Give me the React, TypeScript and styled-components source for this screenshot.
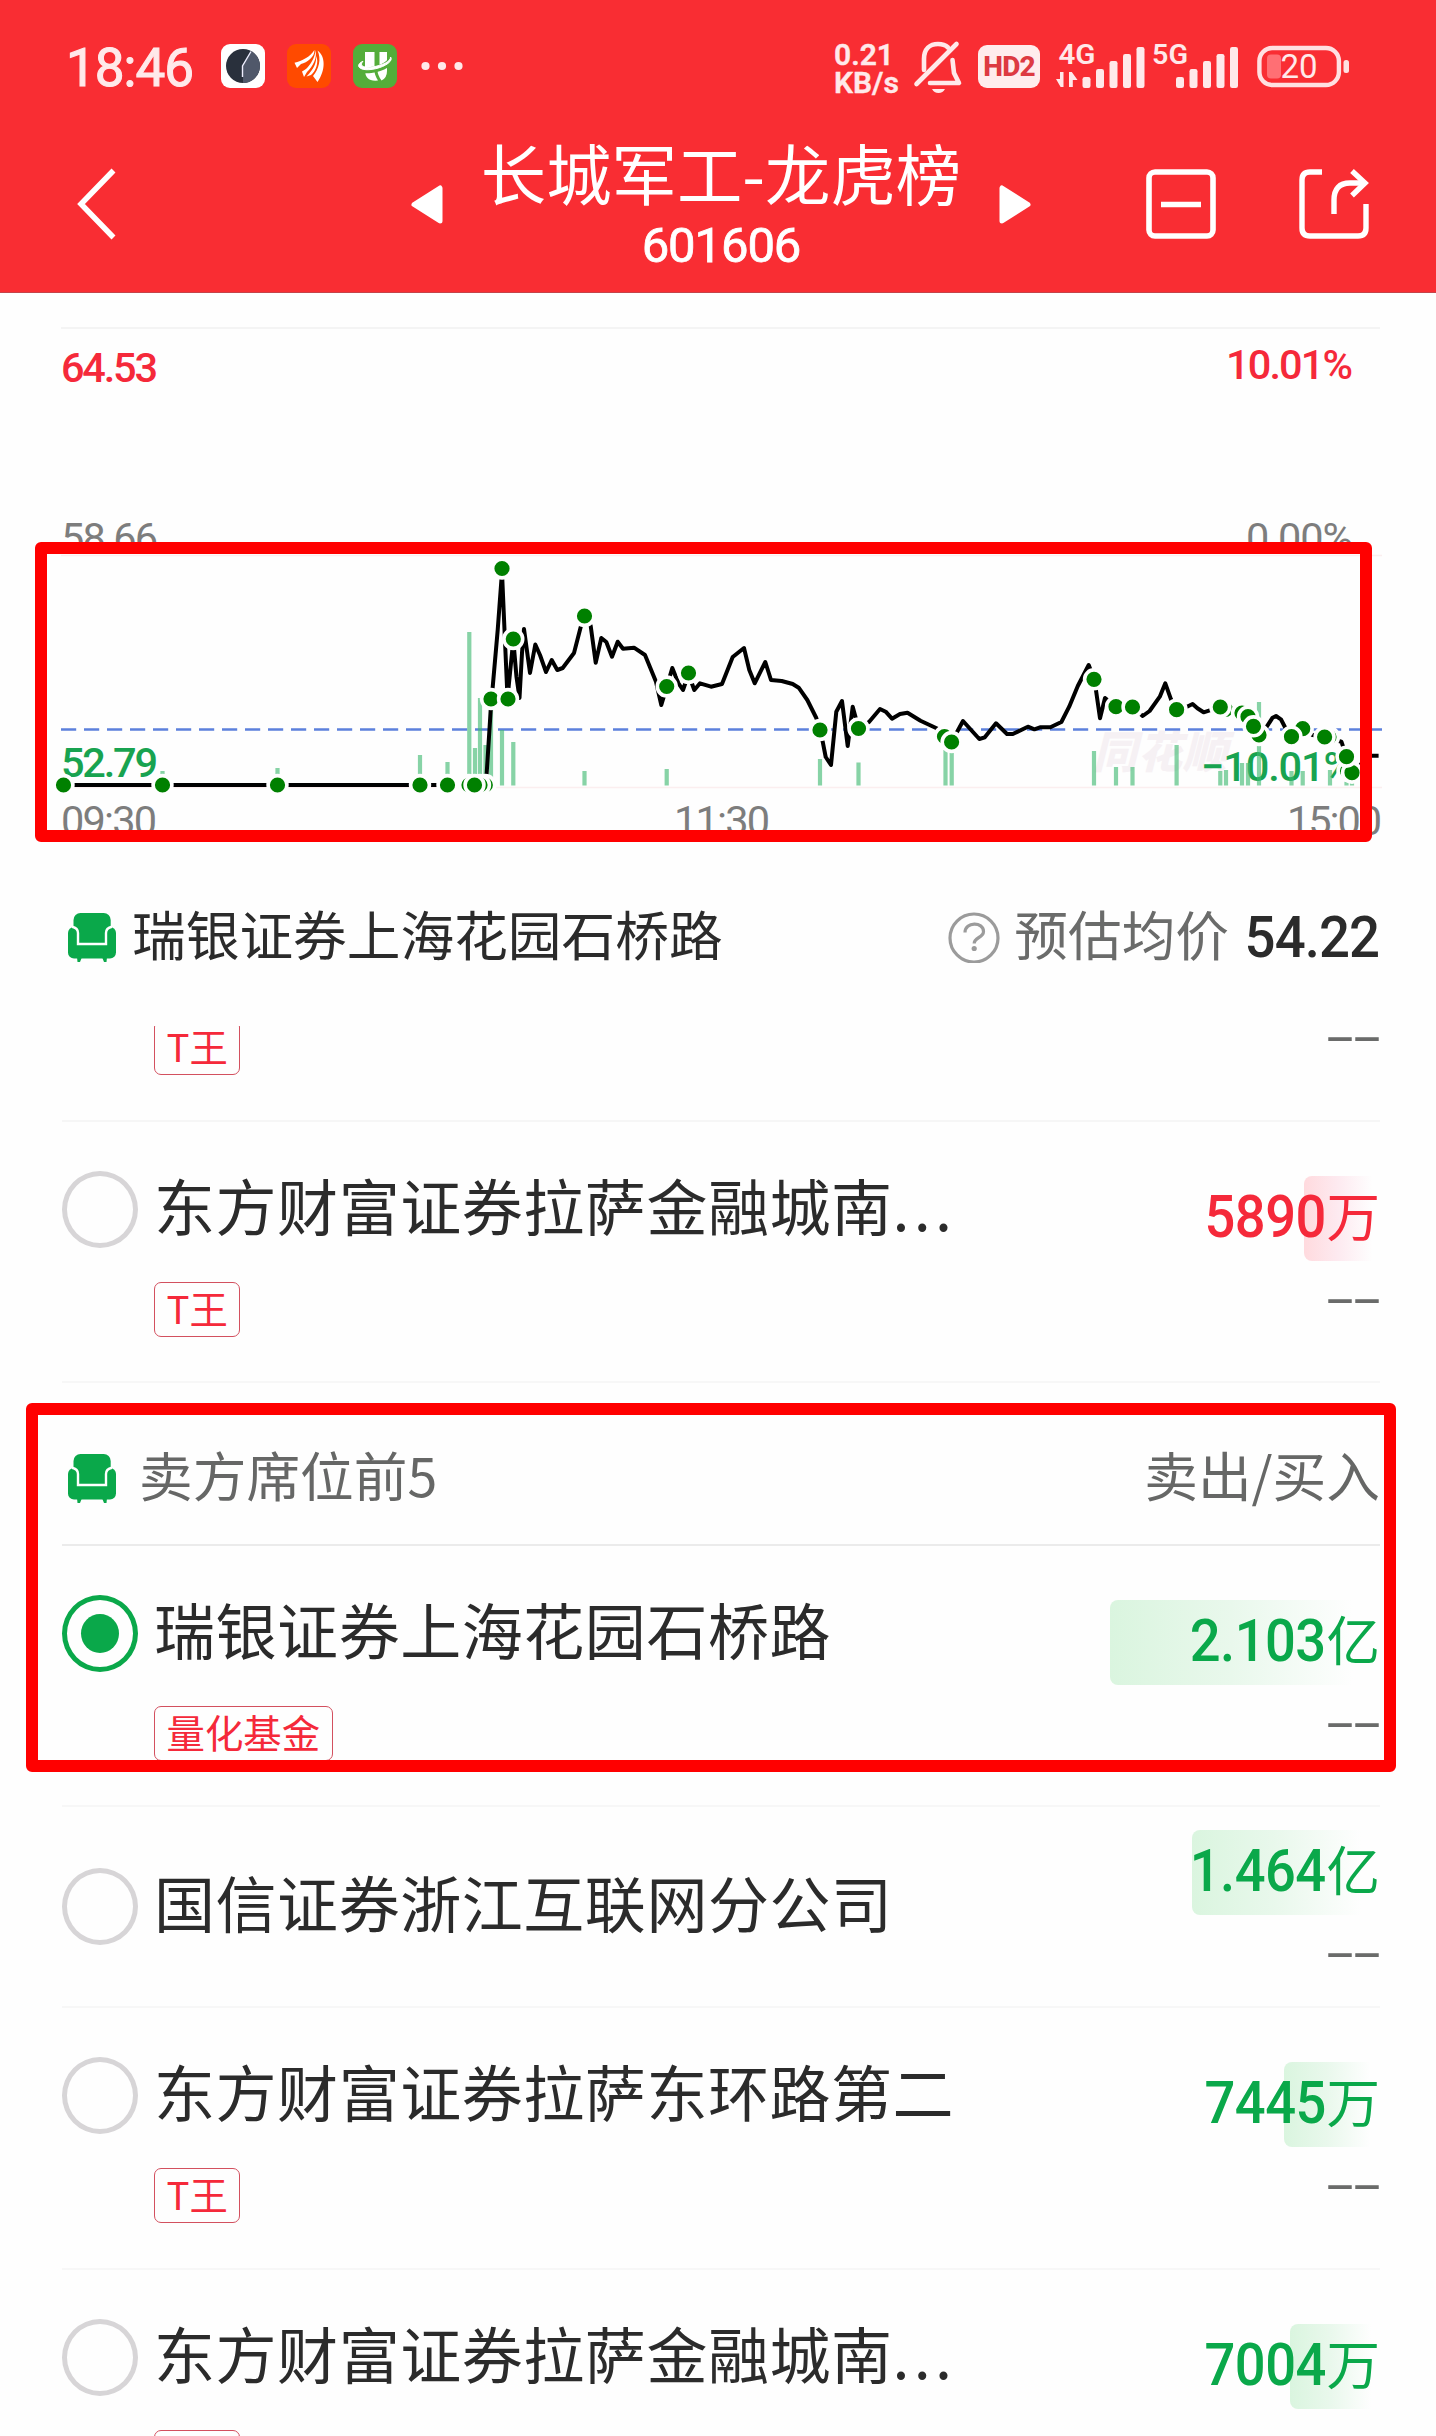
import React from "react";
import styled, { createGlobalStyle } from "styled-components";

const RED = "#f5293a";
const GREEN = "#0aa84a";
const CJK = `"Noto Sans CJK SC", sans-serif`;
const DIGITS = `Roboto, "Noto Sans CJK SC", sans-serif`;

const Global = createGlobalStyle`
  * { box-sizing: border-box; }
  body { margin: 0; background: #fefefe; }
`;

const Page = styled.main`
  position: relative;
  width: 1436px;
  height: 2436px;
  overflow: hidden;
  background: #fefefe;
  color: #2b2b2b;
  font-family: ${CJK};
`;

/* ---------- header ---------- */

const Header = styled.header`
  height: 293px;
  background: #f92d33;
  border-bottom: 1px solid #c4444a;
  color: #fff;
`;

const StatusBar = styled.div`
  display: flex;
  justify-content: space-between;
  height: 132px;
  padding: 0 87px 0 66px;
  align-items: center;
  color: #ffe9ea;
  font-family: ${DIGITS};
`;

const StatusGroup = styled.div`
  display: flex;
  align-items: center;
`;

const Clock = styled.span`
  width: 155px;
  font-size: 53px;
  line-height: 60px;
  letter-spacing: -1px;
  font-weight: 400;
  -webkit-text-stroke: 1.1px currentColor;
  padding-top: 3px;
`;

const AppIcons = styled.div`
  display: flex;
  gap: 22px;
  margin-right: 24px;
`;

const Speed = styled.div`
  width: 79px;
  padding-top: 5px;
  font-size: 30px;
  line-height: 27.5px;
  font-weight: 600;
  letter-spacing: 0;
  -webkit-text-stroke: 0.4px currentColor;
`;

const HdBadge = styled.div`
  display: flex;
  align-items: center;
  justify-content: center;
  width: 62px;
  height: 43px;
  margin: 0 17px 0 15px;
  border-radius: 9px;
  background: #ffeced;
  color: #dd3a42;
  font-size: 28px;
  font-weight: 800;
  letter-spacing: -0.9px;
`;

const StatusIcon = styled.svg<{ $gap?: number }>`
  flex: none;
  display: block;
  overflow: visible;
  margin-left: ${(p) => p.$gap ?? 0}px;
`;

const NavBar = styled.nav`
  display: flex;
  align-items: flex-start;
  height: 160px;
  padding-left: 75px;
`;

const NavIcon = styled.svg<{ $top: number; $left?: number }>`
  flex: none;
  display: block;
  margin-top: ${(p) => p.$top}px;
  margin-left: ${(p) => p.$left ?? 0}px;
`;

const TitleBlock = styled.div`
  width: 554px;
  text-align: center;
`;

const Title = styled.h1`
  margin: 0;
  font-size: 65.4px;
  line-height: 80px;
  font-weight: 400;
  white-space: nowrap;
`;

const Code = styled.div`
  padding-top: 8px;
  font-family: ${DIGITS};
  font-size: 49px;
  line-height: 52px;
  letter-spacing: -1.1px;
  -webkit-text-stroke: 0.8px currentColor;
`;

/* ---------- chart ---------- */

const ChartSvg = styled.svg`
  display: block;
  width: 1436px;
  height: 555px;
  font-family: ${DIGITS};
`;

const AxisText = styled.text<{ $tone: string; $weight?: number }>`
  font-size: 41.5px;
  font-weight: ${(p) => p.$weight ?? 400};
  fill: ${(p) => p.$tone};
`;

const Watermark = styled.text`
  font-family: ${CJK};
  font-size: 44px;
  font-weight: 900;
  font-style: italic;
  fill: #f6f1f4;
`;

const Highlight = styled.div<{ $x: number; $y: number; $w: number; $h: number }>`
  position: absolute;
  left: ${(p) => p.$x}px;
  top: ${(p) => p.$y}px;
  width: ${(p) => p.$w}px;
  height: ${(p) => p.$h}px;
  border: 12px solid #ff0000;
  border-radius: 6px;
  pointer-events: none;
`;

/* ---------- selected seat ---------- */

const SeatBar = styled.section`
  display: flex;
  align-items: center;
  height: 178px;
  padding: 0 57px 0 68px;
`;

const SeatName = styled.span`
  flex: 1;
  margin-left: 16px;
  font-size: 53.7px;
  line-height: 72px;
  padding-bottom: 8px;
  white-space: nowrap;
`;

const AvgLabel = styled.span`
  margin: 0 7px 0 14px;
  padding-bottom: 8px;
  font-size: 53.7px;
  line-height: 72px;
  color: #6a6b6a;
`;

const AvgValue = styled.span`
  font-family: ${DIGITS};
  font-size: 58px;
  line-height: 72px;
  font-weight: 500;
  letter-spacing: -1px;
  transform: scaleX(0.94);
  transform-origin: right center;
`;

/* ---------- list ---------- */

const List = styled.section`
  padding: 0 56px 0 62px;
`;

const PartialRow = styled.div`
  display: flex;
  justify-content: space-between;
  align-items: flex-start;
  height: 95.5px;
  padding-left: 92px;
  overflow: hidden;
  border-bottom: 2px solid #f6f6f6;
`;

const SectionHead = styled.div`
  display: flex;
  align-items: center;
  height: 162.4px;
  padding: 30px 0 0 6px;
  border-bottom: 2px solid #ebebeb;
  color: #666766;
  font-size: 53.7px;
`;

const SectionTitle = styled.span`
  flex: 1;
  margin-left: 23px;
  padding-bottom: 8px;
  line-height: 72px;
`;

const SectionUnit = styled.span`
  padding-bottom: 8px;
  line-height: 72px;
`;

const Row = styled.div<{ $short?: boolean }>`
  display: flex;
  justify-content: space-between;
  height: ${(p) => (p.$short ? 200.7 : 261.7)}px;
  padding-top: ${(p) => (p.$short ? 22 : 53)}px;
  border-bottom: 2px solid #f7f7f7;
`;

const RowLeft = styled.div<{ $short?: boolean }>`
  display: flex;
  margin-top: ${(p) => (p.$short ? 39 : -4)}px;
`;

const Radio = styled.span<{ $on?: boolean }>`
  flex: none;
  display: grid;
  place-items: center;
  width: 76px;
  height: 77px;
  border: 5.5px solid ${(p) => (p.$on ? GREEN : "#d7d5d7")};
  border-radius: 50%;

  &::after {
    content: "";
    width: 38px;
    height: 39px;
    border-radius: 50%;
    background: ${(p) => (p.$on ? GREEN : "transparent")};
  }
`;

const Broker = styled.div`
  display: flex;
  flex-direction: column;
  align-items: flex-start;
  margin-left: 16px;
`;

const BrokerName = styled.span`
  font-size: 61px;
  line-height: 68px;
  letter-spacing: 0.55px;
  white-space: nowrap;
`;

const Ellipsis = styled.span`
  letter-spacing: 4.2px;
`;

const Tag = styled.span<{ $offset?: number }>`
  flex: none;
  height: 55px;
  margin-top: ${(p) => p.$offset ?? 43}px;
  padding: 0 11.5px;
  border: 1.5px solid #d3505f;
  border-radius: 7px;
  color: ${RED};
  font-size: 38.4px;
  line-height: 49px;
  white-space: nowrap;
`;

const RowRight = styled.div`
  display: flex;
  flex-direction: column;
  align-items: flex-end;
`;

const Amount = styled.div<{ $tone: string }>`
  display: grid;
  align-items: center;
  justify-items: end;
  height: 85px;
  color: ${(p) => p.$tone};
  white-space: nowrap;

  > * { grid-area: 1 / 1; }
`;

const AmountText = styled.div`
  display: flex;
  align-items: baseline;
  padding-bottom: 6px;
  line-height: 78px;
`;

const Figure = styled.span`
  font-family: ${DIGITS};
  font-size: 59px;
  font-weight: 500;
  letter-spacing: -0.6px;
  transform: scaleX(0.92);
  transform-origin: right center;
`;

const AmountBar = styled.i<{ $buy?: boolean }>`
  height: 85px;
  border-radius: 8px;
  background: linear-gradient(
    to right,
    ${(p) => (p.$buy ? "#ffdade" : "#daf5df")},
    ${(p) => (p.$buy ? "#fdeaf0" : "#e9f8ec")} 45%,
    #fefefe 90%
  );
`;

const Unit = styled.span`
  font-size: 53.5px;
  margin-left: 1px;
`;

const Blank = styled.span<{ $top?: number }>`
  margin-top: ${(p) => p.$top ?? 8}px;
  margin-right: 2px;
  font-family: "Liberation Sans", sans-serif;
  font-size: 48px;
  line-height: 60px;
  letter-spacing: -2.5px;
  color: #6a6b6a;
  transform: scaleX(2);
  transform-origin: right center;
`;

/* ---------- icons ---------- */

const ClockApp = () => (
  <svg width="44" height="44" viewBox="0 0 44 44">
    <rect width="44" height="44" rx="9" fill="#fff" />
    <circle cx="22" cy="22" r="17" fill="#29303c" />
    <path d="M22 22 L30.5 7.3 A17 17 0 0 1 22 39 Z" fill="#50586a" />
    <path d="M21.5 33 V22 L30 7.5" fill="none" stroke="#eef" strokeWidth="1.4" />
  </svg>
);

const FeatherApp = () => (
  <svg width="44" height="44" viewBox="0 0 44 44">
    <rect width="44" height="44" rx="9" fill="#ff4a00" />
    <g fill="#fff">
      <path d="M7.5 18.8 C15 17 23 13 27.4 6 C28 13 20 18.5 14 20 L10 24 Z" />
      <path d="M28.4 6 C30.5 14 26 22 20 28 L17 33 L15 27.5 C20 25 22 22 24.5 18 C27 14 28.4 10 28.4 6 Z" />
      <path d="M30.5 6.5 C38.5 12 39 26 30.5 38 L26 32 C32 25 34.5 15 30.5 6.5 Z" />
      <path d="M29.2 12 C32 18 29 27 24 31 L19.5 32.5 C27 25 29.5 19 29.2 12 Z" />
    </g>
  </svg>
);

const UApp = () => (
  <svg width="44" height="44" viewBox="0 0 44 44">
    <rect width="44" height="44" rx="9" fill="#54ad3a" />
    <path d="M12 8 H21.5 V27 Q21.5 31 25 36.5 Q12 38 12 26 Z" fill="#fff" />
    <path d="M26.5 8 H34 V27 Q34 34 28.5 36.5 Q24.5 31 24.5 26 L26.5 25 Z" fill="#fff" />
    <path d="M9 17.5 C2 23 8 27.5 18 26 C30 24.5 40 18 37.5 13.5" fill="none" stroke="#54ad3a" strokeWidth="6" />
    <path d="M10 17.2 C1.5 21 6 27 18 25.5 C31 24 41 17 37.5 13 C38 17 30 21.5 19 23 C9 24 6.5 21 10 17.2 Z" fill="#fff" stroke="#fff" strokeWidth="1" />
  </svg>
);

const Dots = () => (
  <svg width="42" height="10" viewBox="0 0 42 10" fill="#ffe9ea">
    <circle cx="4.5" cy="5" r="4.1" />
    <circle cx="21" cy="5" r="4.1" />
    <circle cx="37.5" cy="5" r="4.1" />
  </svg>
);

const BellOff = () => (
  <StatusIcon width="50" height="54" viewBox="1 -1 50 54" fill="none" stroke="#ffe9ea" strokeWidth="4.6" strokeLinecap="round" strokeLinejoin="round">
    <path d="M12 30 V19 C12 9 18 4 26 4 C31 4 34 5.5 36 7.5" />
    <path d="M40.5 20 L42 33 L47 43 H18" />
    <path d="M4.5 44 L44.5 4" />
    <path d="M20 49 H33 Q31 53 26.5 53 Q22 53 20 49 Z" fill="#ffe9ea" stroke="none" />
  </StatusIcon>
);

const BAR_TOPS = [38, 30, 22, 15, 8];

const Signal = ({ label, data }: { label: string; data?: boolean }) => (
  <StatusIcon width={data ? 92 : 88} height="54" viewBox={data ? "1 0 92 54" : "4 0 88 54"} fill="#ffe9ea">
    <text x={data ? 2.5 : 7} y="25" fontFamily="Roboto" fontSize="28" fontWeight="600" textLength={data ? 37 : 36} lengthAdjust="spacingAndGlyphs">
      {label}
    </text>
    {data && (
      <g>
        <path d="M7.5 33 V48 H4.6 L0 40 H4 V33 Z" />
        <path d="M13 48 V33 H15.8 L21.5 41 H16.8 V48 Z" />
      </g>
    )}
    {BAR_TOPS.map((top, i) => (
      <rect key={top} x={(data ? 26.5 : 31) + i * 13.5} y={top} width="8" height={49 - top} rx="2.2" />
    ))}
  </StatusIcon>
);

const Battery = () => (
  <StatusIcon $gap={20} width="92" height="42" viewBox="0 0 92 42">
    <rect x="2.4" y="3" width="79.5" height="37" rx="13" fill="none" stroke="#ffe0e2" strokeWidth="4.4" />
    <rect x="10" y="9.5" width="14" height="24" rx="4" fill="#ff6f74" />
    <rect x="86.5" y="15" width="5.5" height="13" rx="2.5" fill="#ffe0e2" />
    <text x="23.5" y="33" fontFamily="Roboto" fontSize="33" fill="#ffe9ea" textLength="37">
      20
    </text>
  </StatusIcon>
);

const Armchair = () => (
  <svg width="48" height="49" viewBox="0 0 48 49">
    <path d="M9 44 H14 L12 49 H9.5 Z M34 44 H39 L38.5 49 H36 Z" fill={GREEN} />
    <rect x="0" y="14" width="48" height="31.5" rx="6" fill={GREEN} />
    <rect x="5.5" y="0" width="37.2" height="30" rx="7" fill={GREEN} />
    <path d="M4 13.8 Q10 15 10 20 V31 H38 V20 Q38 15 44 13.8" fill="none" stroke="#fff" strokeWidth="2.4" />
  </svg>
);

const Help = () => (
  <svg width="52" height="52" viewBox="0 0 52 52" fill="none" stroke="#9b9b9b" strokeWidth="3.2">
    <circle cx="26" cy="27" r="24" />
    <path d="M17 21.5 C17 10.5 35.5 10.5 35.5 20.5 C35.5 27 26.2 26 26.2 32.5" />
    <circle cx="26.2" cy="37.5" r="2.6" fill="#9b9b9b" stroke="none" />
  </svg>
);

/* ---------- chart data ---------- */

const PRICE: number[][] = [
  [63.5, 785], [486, 785], [486.7, 773], [490.7, 710], [492.7, 687], [497.7, 630], [502, 572], [504.5, 630], [507.5, 698],
  [513.3, 640], [516.5, 677], [519.5, 698], [522, 653], [524, 629], [530, 673], [535.3, 644.5], [540, 655], [546, 672],
  [551.7, 660], [557.3, 670], [562.7, 668], [574, 653], [580.7, 627], [584.5, 610], [590.7, 626], [595.7, 662.7],
  [601.3, 638], [606.3, 642], [612, 656.7], [617.7, 641.7], [623, 648.7], [634, 647.7], [645, 655], [656, 681.7],
  [661.3, 705], [666.7, 687], [672.3, 668], [678.3, 683], [683, 690], [688.5, 674], [694.3, 690], [700, 683.3],
  [711, 686.7], [722, 684], [732.7, 657], [744, 648], [749.3, 670], [754.7, 683.3], [765.3, 662], [771, 680],
  [781.7, 681], [792.7, 684], [798.7, 687.7], [807.3, 700], [816.3, 718], [820, 730], [822.7, 741.7], [825.7, 757],
  [831, 765], [836.3, 711.7], [842, 701], [847.7, 746], [852.7, 706.7], [858.5, 728], [869, 722], [880, 709],
  [885.7, 711.7], [892, 718.7], [900, 714], [907.5, 712.7], [920.5, 720.7], [937.6, 728.7], [951.6, 742], [963, 721],
  [979.3, 739], [984.8, 737.3], [996, 723.3], [1007, 734], [1012.8, 734], [1027.9, 726.7], [1034.4, 729.3],
  [1040, 727.3], [1050.4, 727.3], [1061.4, 722], [1069.2, 706.7], [1077.8, 686], [1088.7, 665], [1094, 679],
  [1096.2, 691.7], [1100, 718.3], [1105, 698], [1116, 706.7], [1132.5, 707], [1142.7, 716], [1149.6, 711],
  [1159.8, 696.7], [1165.3, 683.3], [1171, 699.3], [1176.6, 709.7], [1187, 706.7], [1192.6, 704], [1197.4, 708.3],
  [1203.6, 712.3], [1209.7, 710.3], [1220.3, 707], [1226, 709], [1242, 712], [1248, 717], [1253.5, 726], [1259, 735],
  [1266.8, 726.7], [1272.6, 717.7], [1276, 716], [1280.9, 719.3], [1285.3, 727.7], [1291.5, 736.7], [1302.7, 728.7],
  [1312.6, 735], [1324.6, 737], [1341.4, 741.7], [1346.5, 756.7], [1352, 772.7], [1360.5, 765], [1366.7, 755.7],
  [1378.6, 755.7],
];

const TRADES: number[][] = [
  [63.5, 785], [162.5, 785], [277.5, 785], [420, 785], [447.5, 785], [485.3, 785], [480, 785], [469, 785], [474.5, 785],
  [491, 699], [502, 568.5], [513.3, 639], [508, 699], [584.5, 616], [666.7, 686.5], [688.5, 673], [820, 730],
  [858.5, 728.5], [944.5, 736.5], [951.6, 742], [1094, 679.3], [1116, 706.7], [1132.5, 707], [1176.6, 709.7],
  [1225.5, 709.5], [1220.3, 707], [1242, 713], [1248, 716.7], [1259, 735], [1253.5, 726.3], [1302.7, 728.7],
  [1291.5, 736.7], [1329, 737], [1324.6, 737], [1347.5, 771], [1352, 772.7], [1346.5, 756.7],
];

const VOLUME: number[][] = [
  [162.5, 771], [277.5, 768], [420, 755], [447.5, 762], [469.3, 632], [475, 748], [480, 698], [485.5, 745], [491, 703],
  [502, 730], [513.3, 742], [584.5, 771], [666.7, 769], [820, 759], [858.5, 762.5], [945.5, 750], [951.7, 753],
  [1094, 751], [1116, 767], [1132.5, 767], [1176.6, 745], [1220.3, 771], [1226, 770], [1242, 763], [1248, 763],
  [1259, 702], [1291.5, 771], [1302.7, 771], [1330, 770], [1346.5, 772], [1352, 780],
];

const IntradayChart = () => (
  <ChartSvg viewBox="0 293 1436 555">
    <path d="M61 328 H1380" stroke="#f4f4f4" strokeWidth="2" />
    <path d="M61 555.5 H1382 M61 787.5 H1382" stroke="#fbeeef" strokeWidth="1.4" />
    <Watermark x="1093" y="768" textLength="134">同花顺</Watermark>
    <AxisText $tone={RED} $weight={500} x="61" y="382" textLength="97">64.53</AxisText>
    <AxisText $tone={RED} $weight={500} x="1353" y="378.5" textAnchor="end" textLength="127">10.01%</AxisText>
    <AxisText $tone="#7d7d7d" x="61" y="551.5" textLength="97">58.66</AxisText>
    <AxisText $tone="#7d7d7d" x="1353" y="551.5" textAnchor="end" textLength="107">0.00%</AxisText>
    <AxisText $tone="#18a350" $weight={500} x="61" y="777" textLength="97">52.79</AxisText>
    <AxisText $tone="#18a350" $weight={500} x="1354" y="781" textAnchor="end" textLength="153">−10.01%</AxisText>
    <AxisText $tone="#7d7d7d" x="61" y="835" textLength="96">09:30</AxisText>
    <AxisText $tone="#7d7d7d" x="674" y="835" textLength="96">11:30</AxisText>
    <AxisText $tone="#7d7d7d" x="1382" y="835" textAnchor="end" textLength="95">15:00</AxisText>
    <path d="M61 729.5 H1382" stroke="#5c80dc" strokeWidth="2.6" strokeDasharray="15.2 7.8" />
    {VOLUME.map(([x, top]) => (
      <rect key={x} x={x - 2.1} y={top} width="4.2" height={785.5 - top} fill="#3db870" opacity="0.62" />
    ))}
    <polyline points={PRICE.map((p) => p.join(",")).join(" ")} fill="none" stroke="#000" strokeWidth="4" strokeLinejoin="round" />
    {TRADES.map(([x, y]) => (
      <circle key={x} cx={x} cy={y} r="9.4" fill="#008000" stroke="#fefefe" strokeWidth="3.6" />
    ))}
  </ChartSvg>
);

/* ---------- rows ---------- */

type Seat = {
  name: string;
  cut?: boolean;
  tag?: string;
  value: string;
  unit: string;
  share: number;
  buy?: boolean;
  selected?: boolean;
};

const BUY_SEATS: Seat[] = [
  { name: "东方财富证券拉萨金融城南", cut: true, tag: "T王", value: "5890", unit: "万", share: 0.589, buy: true },
];

const SELL_SEATS: Seat[] = [
  { name: "瑞银证券上海花园石桥路", tag: "量化基金", value: "2.103", unit: "亿", share: 2.103, selected: true },
  { name: "国信证券浙江互联网分公司", value: "1.464", unit: "亿", share: 1.464 },
  { name: "东方财富证券拉萨东环路第二", tag: "T王", value: "7445", unit: "万", share: 0.7445 },
  { name: "东方财富证券拉萨金融城南", cut: true, tag: "T王", value: "7004", unit: "万", share: 0.7004 },
];

const PX_PER_YI = 128.4;

const SeatRow = ({ seat }: { seat: Seat }) => {
  const short = !seat.tag;
  return (
    <Row $short={short}>
      <RowLeft $short={short}>
        <Radio $on={seat.selected} />
        <Broker>
          <BrokerName>
            {seat.name}
            {seat.cut && <Ellipsis>...</Ellipsis>}
          </BrokerName>
          {seat.tag && <Tag>{seat.tag}</Tag>}
        </Broker>
      </RowLeft>
      <RowRight>
        <Amount $tone={seat.buy ? RED : GREEN}>
          <AmountBar $buy={seat.buy} style={{ width: seat.share * PX_PER_YI }} />
          <AmountText>
            <Figure>{seat.value}</Figure>
            <Unit>{seat.unit}</Unit>
          </AmountText>
        </Amount>
        <Blank>--</Blank>
      </RowRight>
    </Row>
  );
};

export default function App() {
  return (
    <Page>
      <Global />
      <Header>
        <StatusBar>
          <StatusGroup>
            <Clock>18:46</Clock>
            <AppIcons>
              <ClockApp />
              <FeatherApp />
              <UApp />
            </AppIcons>
            <Dots />
          </StatusGroup>
          <StatusGroup>
            <Speed>
              0.21
              <br />
              KB/s
            </Speed>
            <BellOff />
            <HdBadge>HD2</HdBadge>
            <Signal label="4G" data />
            <Signal label="5G" />
            <Battery />
          </StatusGroup>
        </StatusBar>
        <NavBar>
          <NavIcon $top={36} width="42" height="72" viewBox="0 0 42 72" fill="none" stroke="#fff" strokeWidth="5.5">
            <path d="M38.5 2.5 L6 36 L38.5 69.5" />
          </NavIcon>
          <NavIcon $top={52} $left={293} width="34" height="41" viewBox="0 0 34 41">
            <path d="M4 20.5 L30 4 V37 Z" fill="#fff" stroke="#fff" strokeWidth="5" strokeLinejoin="round" />
          </NavIcon>
          <TitleBlock>
            <Title>长城军工-龙虎榜</Title>
            <Code>601606</Code>
          </TitleBlock>
          <NavIcon $top={52} width="34" height="41" viewBox="0 0 34 41">
            <path d="M30 20.5 L4 4 V37 Z" fill="#fff" stroke="#fff" strokeWidth="5" strokeLinejoin="round" />
          </NavIcon>
          <NavIcon $top={36} $left={113} width="72" height="72" viewBox="0 0 72 72" fill="none" stroke="#fff" strokeWidth="5.6">
            <rect x="4" y="4" width="64" height="64" rx="6" />
            <path d="M16 36.5 H56" />
          </NavIcon>
          <NavIcon $top={36} $left={81} width="74" height="72" viewBox="0 0 74 72" fill="none" stroke="#fff" strokeWidth="5.4">
            <path d="M24 4 H12 Q4 4 4 12 V60 Q4 68 12 68 H60 Q68 68 68 60 V36" />
            <path d="M36 46 V32 Q36 15 52 15 H67" />
            <path d="M54 3 L67 15 L54 27.5" />
          </NavIcon>
        </NavBar>
      </Header>

      <IntradayChart />

      <SeatBar>
        <Armchair />
        <SeatName>瑞银证券上海花园石桥路</SeatName>
        <Help />
        <AvgLabel>预估均价</AvgLabel>
        <AvgValue>54.22</AvgValue>
      </SeatBar>

      <List>
        <PartialRow>
          <Tag $offset={-6}>T王</Tag>
          <Blank $top={-20}>--</Blank>
        </PartialRow>
        {BUY_SEATS.map((s) => (
          <SeatRow key={s.name} seat={s} />
        ))}
        <SectionHead>
          <Armchair />
          <SectionTitle>卖方席位前5</SectionTitle>
          <SectionUnit>卖出/买入</SectionUnit>
        </SectionHead>
        {SELL_SEATS.map((s) => (
          <SeatRow key={s.name} seat={s} />
        ))}
      </List>

      <Highlight $x={35} $y={542} $w={1337} $h={300} />
      <Highlight $x={26} $y={1403} $w={1370} $h={368.5} />
    </Page>
  );
}
